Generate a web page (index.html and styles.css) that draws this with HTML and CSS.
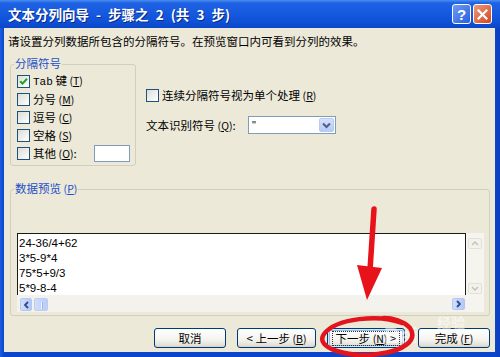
FILE: index.html
```html
<!DOCTYPE html>
<html lang="zh-CN">
<head>
<meta charset="utf-8">
<title>文本分列向导</title>
<link rel="stylesheet" href="styles.css">
</head>
<body>
<div class="window">
  <div class="titlebar">
    <span class="title">文本分列向导 - 步骤之 2 (共 3 步)</span>
    <div class="caption-buttons">
      <span class="cap-btn help">?</span>
      <span class="cap-btn close"><svg width="11" height="11" viewBox="0 0 11 11"><path d="M1.5 1.5 L9.5 9.5 M9.5 1.5 L1.5 9.5" stroke="#fff" stroke-width="2.2" stroke-linecap="square"/></svg></span>
    </div>
  </div>
  <div class="client">
    <p class="intro">请设置分列数据所包含的分隔符号。在预览窗口内可看到分列的效果。</p>
    <div class="top-row">
      <div class="group delims">
        <div class="legend">分隔符号</div>
        <div class="rows">
          <div class="cb-row"><span class="cb"><svg width="11" height="11" viewBox="0 0 11 11"><path d="M2.2 5.2 L4.5 7.6 L9 2.8" fill="none" stroke="#21A121" stroke-width="2"/></svg></span><span class="lbl"><span class="latin">Tab</span> 键 <span class="mn">(<u>T</u>)</span></span></div>
          <div class="cb-row"><span class="cb"></span><span class="lbl">分号 <span class="mn">(<u>M</u>)</span></span></div>
          <div class="cb-row"><span class="cb"></span><span class="lbl">逗号 <span class="mn">(<u>C</u>)</span></span></div>
          <div class="cb-row"><span class="cb"></span><span class="lbl">空格 <span class="mn">(<u>S</u>)</span></span></div>
          <div class="cb-row"><span class="cb"></span><span class="lbl">其他 <span class="mn">(<u>O</u>)</span>:</span><span class="other-input"></span></div>
        </div>
      </div>
      <div class="options">
        <div class="cb-row"><span class="cb"></span><span class="lbl">连续分隔符号视为单个处理 <span class="mn">(<u>R</u>)</span></span></div>
        <div class="qual-row">
          <span class="qual-label">文本识别符号 <span class="mn">(<u>Q</u>)</span>:</span>
          <div class="combo"><span class="combo-value">"</span><span class="combo-btn"><svg width="9" height="7" viewBox="0 0 9 7"><path d="M1 1.5 L4.5 5 L8 1.5" fill="none" stroke="#4D6185" stroke-width="2"/></svg></span></div>
        </div>
      </div>
    </div>
    <div class="group preview-group">
      <div class="legend">数据预览 <span class="mn">(<u>P</u>)</span></div>
      <div class="preview">
        <div class="pv-text">
          <div>24-36/4+62</div>
          <div>3*5-9*4</div>
          <div>75*5+9/3</div>
          <div>5*9-8-4</div>
        </div>
        <div class="pv-vscroll">
          <span class="sb-btn disabled"><svg width="8" height="5" viewBox="0 0 8 5"><path d="M1 4 L4 1 L7 4" fill="none" stroke="#C4C3BA" stroke-width="1.5"/></svg></span>
          <span class="sb-btn disabled down"><svg width="8" height="5" viewBox="0 0 8 5"><path d="M1 1 L4 4 L7 1" fill="none" stroke="#C4C3BA" stroke-width="1.5"/></svg></span>
        </div>
        <div class="pv-hscroll">
          <span class="sb-btn h"><svg width="5" height="8" viewBox="0 0 5 8"><path d="M4 1 L1 4 L4 7" fill="none" stroke="#2E4A8A" stroke-width="1.8"/></svg></span>
          <span class="sb-thumb"></span>
          <span class="sb-btn h right"><svg width="5" height="8" viewBox="0 0 5 8"><path d="M1 1 L4 4 L1 7" fill="none" stroke="#2E4A8A" stroke-width="1.8"/></svg></span>
        </div>
      </div>
    </div>
    <div class="buttons">
      <button class="btn w-cancel">取消</button>
      <button class="btn w-back">&lt; 上一步 <span class="mn">(<u>B</u>)</span></button>
      <button class="btn w-next default"><span class="focus">下一步 <span class="mn">(<u>N</u>)</span> &gt;</span></button>
      <button class="btn w-finish">完成 <span class="mn">(<u>F</u>)</span></button>
    </div>
  </div>
  <svg class="annot" width="500" height="357" viewBox="0 0 500 357">
    <text x="384" y="343" class="wm wm-big">Bai</text>
    <text x="437" y="328" class="wm wm-small">经验</text>
    <line x1="374" y1="209" x2="370" y2="270" stroke="#E8121A" stroke-width="5.5" stroke-linecap="round"/>
    <polygon points="357,265 382,268 367,300" fill="#E8121A"/>
    <path d="M402 323 C 380 314, 336 318, 324 334 C 314 348, 348 358, 378 354 C 404 351, 418 340, 410 328 C 404 321, 392 318, 384 318" fill="none" stroke="#E3141B" stroke-width="4.5" stroke-linecap="round"/>
  </svg>
</div>
</body>
</html>
```

FILE: styles.css
```css
* { box-sizing: border-box; }
html, body { margin: 0; padding: 0; }
body {
  width: 500px;
  height: 357px;
  overflow: hidden;
  font-family: "Noto Sans CJK SC", "Liberation Sans", sans-serif;
  font-size: 11.5px;
  color: #000;
}
.window {
  position: relative;
  width: 500px;
  height: 357px;
  display: flex;
  flex-direction: column;
  background: linear-gradient(90deg, #1C5FE0 0, #0A45CC 4px, #0A45CC 495px, #0B3FBE 100%);
  overflow: hidden;
}
.titlebar {
  height: 28px;
  flex: none;
  display: flex;
  align-items: center;
  background: linear-gradient(to bottom, #4A8EF2 0, #1F62E2 3px, #165AE0 45%, #0E50D6 80%, #0A47C6 100%);
}
.title {
  flex: 1;
  padding-left: 8px;
  color: #fff;
  font-weight: bold;
  font-size: 13.5px;
  line-height: 16px;
  white-space: pre;
  word-spacing: 4px;
  text-shadow: 1px 1px 0 #0A2A88;
}
.caption-buttons {
  display: flex;
  gap: 2px;
  margin-right: 8px;
}
.cap-btn {
  width: 19px;
  height: 20px;
  border: 1px solid #fff;
  border-radius: 3px;
  display: flex;
  align-items: center;
  justify-content: center;
}
.help {
  background: linear-gradient(135deg, #6E9CF6, #2B5EDC);
  color: #fff;
  font: bold 15px/1 "Liberation Sans", sans-serif;
}
.close {
  background: linear-gradient(135deg, #EB9A7E, #D4461E);
}
.client {
  flex: 1;
  margin: 0 5px 5px 4px;
  background: #ECE9D8;
  display: flex;
  flex-direction: column;
}
.intro {
  margin: 6px 0 0 4px;
  line-height: 14px;
}
.mn { font-size: 10.5px; }
.latin { font-family: "Liberation Mono", monospace; font-size: 11px; }
.top-row {
  display: flex;
  margin-top: 16px;
}
.group {
  border: 1px solid #D0D0BF;
  border-radius: 3px;
}
.legend {
  margin: -9px 0 0 3px;
  padding: 0 1px;
  width: fit-content;
  background: #ECE9D8;
  color: #1F4FC9;
  line-height: 14px;
}
.delims {
  margin-left: 6px;
  width: 126px;
  height: 102px;
  flex: none;
}
.rows { padding-top: 2px; }
.cb-row {
  display: flex;
  align-items: center;
  height: 18px;
  gap: 3px;
}
.delims .cb-row { padding: 0 5px 0 6px; }
.cb {
  width: 13px;
  height: 13px;
  flex: none;
  border: 1px solid #1C5180;
  background: linear-gradient(135deg, #DCDCD7, #FFFFFF);
  display: flex;
  align-items: center;
  justify-content: center;
}
.lbl { line-height: 14px; white-space: nowrap; }
.other-input {
  margin-left: auto;
  width: 36px;
  height: 17px;
  border: 1px solid #7F9DB9;
  background: #fff;
}
.options {
  margin: 22px 0 0 10px;
  display: flex;
  flex-direction: column;
}
.qual-row {
  margin-top: 12px;
  height: 18px;
  display: flex;
  align-items: center;
}
.qual-label {
  width: 102px;
  flex: none;
  line-height: 14px;
  white-space: nowrap;
}
.combo {
  width: 88px;
  height: 18px;
  border: 1px solid #7F9DB9;
  background: #fff;
  display: flex;
  align-items: stretch;
}
.combo-value {
  flex: 1;
  padding: 1px 0 0 3px;
  font: 11px/14px "Liberation Sans", sans-serif;
}
.combo-btn {
  width: 15px;
  margin: 1px;
  border: 1px solid #B9CBF3;
  border-radius: 2px;
  background: linear-gradient(to bottom, #D4E0FD, #B6CAF6);
  display: flex;
  align-items: center;
  justify-content: center;
}
.preview-group {
  margin: 23px 5px 0 6px;
  height: 127px;
}
.preview {
  margin: 37px 0 0 6px;
  width: 467px;
  height: 79px;
  display: grid;
  grid-template-columns: 449px 18px;
  grid-template-rows: 62px 17px;
}
.pv-text {
  grid-column: 1;
  grid-row: 1;
  background: #fff;
  border-top: 1px solid #1A1A1A;
  border-left: 1px solid #1A1A1A;
  border-right: 1px solid #1A1A1A;
  padding: 2px 0 0 1px;
  overflow: hidden;
  font: 11.5px/15px "Liberation Sans", sans-serif;
}
.pv-vscroll {
  grid-column: 2;
  grid-row: 1 / span 2;
  background: #F5F4EF;
  display: flex;
  flex-direction: column;
  align-items: center;
  padding: 5px 0 18px;
}
.pv-hscroll {
  grid-column: 1;
  grid-row: 2;
  background: #F3F2ED;
  display: flex;
  align-items: flex-start;
  padding: 3px 1px 0 3px;
}
.sb-btn {
  width: 14px;
  height: 11px;
  border-radius: 2px;
  display: flex;
  align-items: center;
  justify-content: center;
}
.sb-btn.disabled {
  background: #F3F2EC;
  border: 1px solid #E3E1D7;
}
.sb-btn.down { margin-top: auto; }
.sb-btn.h {
  width: 12px;
  height: 13px;
  border: 1px solid #B4C6F2;
  background: linear-gradient(to right, #D2DFFD, #B3C7F5);
}
.sb-btn.right { margin-left: auto; width: 13px; height: 12px; }
.sb-thumb {
  margin-left: 2px;
  width: 14px;
  height: 13px;
  border: 1px solid #BCCDF3;
  border-radius: 2px;
  background:
    repeating-linear-gradient(90deg, transparent 0 3px, #EEF3FF 3px 4px, #9FB5E8 4px 5px) 3px 3px / 8px 7px no-repeat,
    linear-gradient(to right, #CFDCFC, #BACCF7);
}
.buttons {
  margin-top: 12px;
  display: flex;
  justify-content: flex-end;
  padding-right: 5px;
}
.btn {
  height: 20px;
  padding: 0;
  border: 1px solid #003C74;
  border-radius: 3px;
  background: linear-gradient(to bottom, #FFFFFF 0, #F4F3EE 60%, #E3E0D6 90%, #D6D0C5 100%);
  font-family: "Noto Sans CJK SC", "Liberation Sans", sans-serif;
  font-size: 11.5px;
  line-height: 16px;
  color: #000;
  white-space: nowrap;
}
.w-cancel { width: 72px; }
.w-back { width: 79px; margin-left: 11px; }
.w-next { width: 78px; margin-left: 11px; }
.w-finish { width: 72px; margin-left: 13px; }
.default {
  box-shadow: inset 0 0 0 1px #CEE7FF, inset 0 0 0 2px #98B8EA;
}
.focus {
  display: inline-block;
  padding: 0 3px;
  outline: 1px dotted #333;
  line-height: 13px;
}
.annot {
  position: absolute;
  left: 0;
  top: 0;
  pointer-events: none;
}
.wm {
  fill: #fff;
  fill-opacity: 0.55;
  font-family: "Liberation Sans", sans-serif;
  font-weight: bold;
}
.wm-big { font-size: 22px; }
.wm-small { font-family: "Noto Sans CJK SC", sans-serif; font-size: 14px; }
```
